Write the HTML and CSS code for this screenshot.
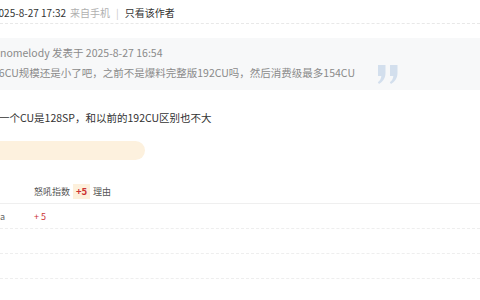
FILE: index.html
```html
<!DOCTYPE html>
<html lang="zh">
<head>
<meta charset="utf-8">
<link rel="stylesheet" href="styles.css">
</head>
<body>
<div class="page">
  <div class="meta">
    <span class="date">2025-8-27 17:32</span>
    <span class="from">来自手机</span>
    <span class="pipe">|</span>
    <span class="only">只看该作者</span>
  </div>

  <div class="quote">
    <div class="qhead">nomelody 发表于 2025-8-27 16:54</div>
    <div class="qbody">56CU规模还是小了吧，之前不是爆料完整版192CU吗，然后消费级最多154CU<svg class="qmark" width="22" height="19" viewBox="0 0 22 19"><path d="M1 0H8.5V8C8.5 13 6 16.5 2 19L0.8 17.2C3 15.6 4.2 13.6 4.3 11H1Z"/><path d="M13 0H20.5V8C20.5 13 18 16.5 14 19L12.8 17.2C15 15.6 16.2 13.6 16.3 11H13Z"/></svg></div>
  </div>

  <p class="message">一个CU是128SP，和以前的192CU区别也不大</p>

  <div class="rate-bar"></div>

  <div class="rate">
    <div class="row head">
      <div class="c1"></div>
      <div class="c2">怒吼指数<span class="badge">+5</span></div>
      <div class="c3">理由</div>
    </div>
    <div class="row">
      <div class="c1"><span class="user">a</span></div>
      <div class="c2 red">+ 5</div>
      <div class="c3"></div>
    </div>
    <div class="row"></div>
    <div class="row"></div>
  </div>
</div>
</body>
</html>
```

FILE: styles.css
```css
html, body {
  margin: 0;
  padding: 0;
  background: #ffffff;
}
body {
  width: 480px;
  height: 300px;
  overflow: hidden;
  font-family: "Noto Sans CJK SC", "Noto Sans", sans-serif;
  font-size: 11px;
  color: #333333;
}
.page {
  width: 480px;
  overflow: hidden;
}
.meta {
  height: 21px;
  padding-top: 2px;
  line-height: 22px;
  font-size: 10px;
  border-bottom: 1px dashed #e8e8e8;
  display: flex;
  white-space: nowrap;
}
.meta .date {
  margin-left: -7px;
  color: #333333;
}
.meta .from {
  margin-left: 4px;
  color: #b0b0b0;
}
.meta .pipe {
  color: #c8c8c8;
  margin-left: 6px;
}
.meta .only {
  margin-left: 6px;
  color: #333333;
}
.quote {
  margin-top: 14px;
  background: #f7f8f9;
  padding: 6px 0 6px 0;
  font-size: 10.5px;
  line-height: 18px;
  color: #8a8a8a;
  white-space: nowrap;
}
.qbody {
  margin-left: -7px;
  display: flex;
  align-items: center;
}
.qmark {
  margin-left: 22px;
  fill: #d3dfed;
  margin-top: 3px;
}
.message {
  margin: 19px 0 0 -1px;
  font-size: 10.5px;
  line-height: 18px;
  color: #333333;
  white-space: nowrap;
}
.rate-bar {
  margin-top: 14px;
  margin-left: -20px;
  width: 165px;
  height: 19px;
  border-radius: 10px;
  background: #fdf1de;
}
.rate {
  margin-top: 19px;
  font-size: 9px;
}
.row {
  display: flex;
  align-items: center;
  height: 24px;
  border-bottom: 1px dashed #eeeeee;
  white-space: nowrap;
}
.row.head {
  border-bottom: 1px solid #efefef;
  color: #555555;
}
.c1 {
  width: 34px;
  text-align: right;
  overflow: hidden;
}
.c1 .user {
  color: #666666;
  margin-right: 31px;
}
.c2 {
  width: 59px;
}
.badge {
  display: inline-block;
  padding: 0 3px;
  background: #fdf0dc;
  color: #cc3333;
  font-weight: bold;
  font-size: 9.5px;
  line-height: 15px;
  margin-left: 3px;
}
.red {
  color: #cc3333;
}
.c3 {
  color: #555555;
}
```
